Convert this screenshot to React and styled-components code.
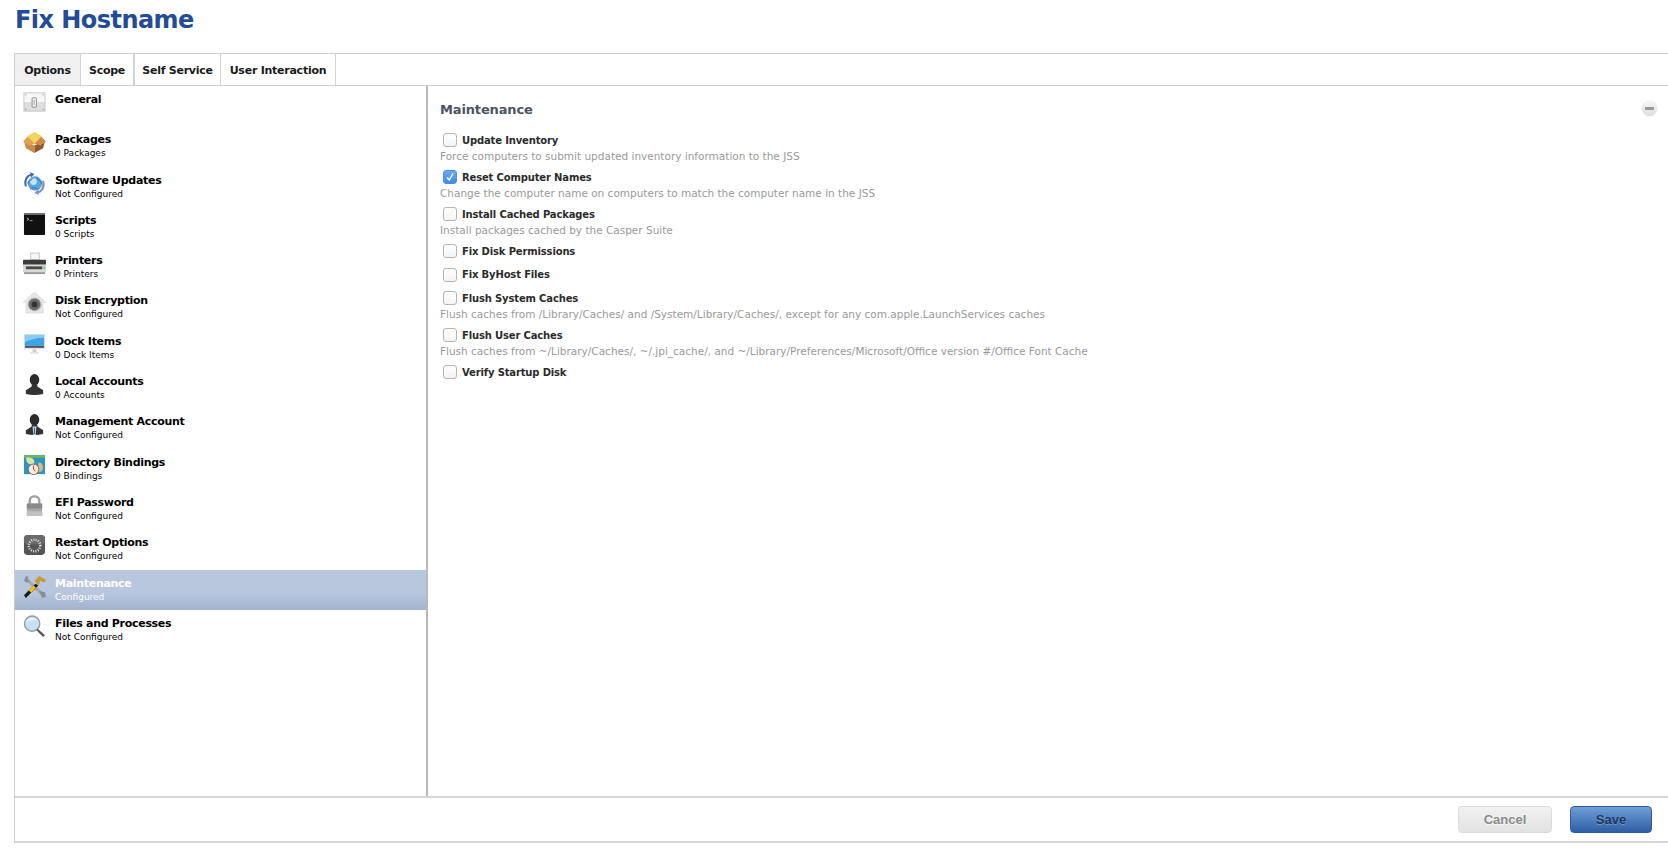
import React from 'react'
import styled, { createGlobalStyle } from 'styled-components'

const GlobalStyle = createGlobalStyle`
  html, body {
    margin: 0;
    padding: 0;
    background: #fff;
    font-family: "DejaVu Sans", "Liberation Sans", sans-serif;
  }
`

const Page = styled.div`
  display: flex;
  flex-direction: column;
  width: 1668px;
  height: 854px;
  overflow: hidden;
`

const Title = styled.h1`
  margin: 0;
  height: 53px;
  padding: 4px 0 0 15px;
  box-sizing: border-box;
  font-size: 24px;
  letter-spacing: -0.55px;
  line-height: 32px;
  font-weight: 700;
  color: #234b96;
`

const Panel = styled.div`
  margin-left: 14px;
  height: 790px;
  box-sizing: border-box;
  display: flex;
  flex-direction: column;
  border-left: 1px solid #cfcfcf;
  border-bottom: 2px solid #d6d6d6;
`

const TabBar = styled.div`
  display: flex;
  flex-shrink: 0;
  height: 33px;
  box-sizing: border-box;
  margin-left: -1px;
  border-top: 1px solid #cfcfcf;
  border-bottom: 1px solid #cfcfcf;
`

const Tab = styled.div`
  display: flex;
  align-items: center;
  justify-content: center;
  box-sizing: border-box;
  width: ${p => p.$width}px;
  padding-top: 1px;
  border-right: ${p => p.$thick ? 2 : 1}px solid #d4d4d4;
  border-left: ${p => p.$first ? '1px solid #cfcfcf' : 'none'};
  background: ${p => p.$active ? '#f0f0f0' : '#fff'};
  font-size: 11px;
  letter-spacing: -0.25px;
  font-weight: 700;
  color: #1a1a1a;
`

const Body = styled.div`
  flex: 1;
  display: flex;
  min-height: 0;
`

const Sidebar = styled.div`
  width: 411px;
  flex-shrink: 0;
  border-right: 2px solid #b9b9b9;
`

const Row = styled.div`
  display: flex;
  height: 40.3px;
  padding-left: 8px;
  background: ${p => p.$selected ? 'linear-gradient(#b9c7de 0, #b9c7de 55%, #a3b3cf 100%)' : 'transparent'};
  color: ${p => p.$selected ? '#fff' : '#000'};
`

const RowIcon = styled.div`
  width: 23px;
  height: 23px;
  margin-top: 5px;
  flex-shrink: 0;

  svg {
    display: block;
  }
`

const RowText = styled.div`
  margin-left: 9px;
  padding-top: 7px;
`

const RowTitle = styled.div`
  font-size: 11px;
  letter-spacing: -0.3px;
  line-height: 14px;
  font-weight: 700;
`

const RowSub = styled.div`
  font-size: 9px;
  line-height: 12px;
`

const Content = styled.div`
  position: relative;
  flex: 1;
  padding: 14px 0 0 12px;
`

const Heading = styled.h2`
  margin: 0 0 11px;
  font-size: 13px;
  letter-spacing: -0.15px;
  line-height: 20px;
  font-weight: 700;
  color: #4b5563;
`

const Collapse = styled.div`
  position: absolute;
  top: 15px;
  right: 11px;
  width: 15px;
  height: 15px;
  border-radius: 50%;
  background: linear-gradient(#f8f8f8, #dcdcdc);
  box-shadow: 0 0 1px #bbb;

  &::after {
    content: "";
    position: absolute;
    left: 3px;
    top: 6px;
    width: 9px;
    height: 3px;
    background: #9a9a9a;
  }
`

const Option = styled.div`
  margin-bottom: ${p => p.$described ? 4 : 5.7}px;
`

const OptionLine = styled.div`
  display: flex;
  align-items: center;
  height: 18px;
  padding-left: 3px;
`

const CheckBox = styled.span`
  display: flex;
  align-items: center;
  justify-content: center;
  width: 14px;
  height: 14px;
  box-sizing: border-box;
  border-radius: 3px;
  border: 1px solid ${p => p.$checked ? '#4a90e8' : '#b5b5b5'};
  background: ${p => p.$checked ? 'linear-gradient(#6aaaf5, #3d8bf0)' : 'linear-gradient(#fff, #f4f4f4)'};
`

const OptionLabel = styled.span`
  margin-left: 5px;
  font-size: 10px;
  letter-spacing: -0.15px;
  font-weight: 700;
  color: #2b2b2b;
`

const OptionHint = styled.div`
  font-size: 10.5px;
  line-height: 15px;
  color: #9a9a9a;
`

const Footer = styled.div`
  display: flex;
  flex-shrink: 0;
  justify-content: flex-end;
  align-items: center;
  gap: 18px;
  height: 45px;
  padding: 0 16px 1px 0;
  border-top: 2px solid #d6d6d6;
  box-sizing: border-box;
`

const Button = styled.div`
  display: flex;
  align-items: center;
  justify-content: center;
  width: ${p => p.$width}px;
  height: 27px;
  box-sizing: border-box;
  border-radius: 4px;
  font-family: "Liberation Sans", sans-serif;
  font-size: 13px;
  font-weight: 700;
  text-shadow: 0 1px 0 rgba(255, 255, 255, ${p => p.$primary ? 0.25 : 0.8});
  border: 1px solid ${p => p.$primary ? '#2f5b9e' : '#dcdcdc'};
  background: ${p => p.$primary ? 'linear-gradient(#6f9fd6, #2f5ea6)' : 'linear-gradient(#f2f2f2, #e2e2e2)'};
  color: ${p => p.$primary ? '#1c3763' : '#8a8a8a'};
`

const Svg = ({ children }) => (
  <svg width="23" height="23" viewBox="0 0 24 24">{children}</svg>
)

const icons = {
  general: (
    <Svg>
      <rect x="1" y="2" width="22" height="19" fill="#dedede" stroke="#c4c4c4" />
      <rect x="1.5" y="2.5" width="21" height="9" fill="#f7f7f7" />
      <rect x="9.5" y="7" width="4.5" height="10" rx="1" fill="#f4f4f4" stroke="#8d8d8d" />
      <rect x="11" y="9" width="1.5" height="6" fill="#bdbdbd" />
      <circle cx="3" cy="4" r=".6" fill="#777" />
      <circle cx="21" cy="4" r=".6" fill="#777" />
      <circle cx="3" cy="19" r=".6" fill="#777" />
      <circle cx="21" cy="19" r=".6" fill="#777" />
    </Svg>
  ),
  packages: (
    <Svg>
      <path d="M1 10 L12 15 V23 L3 18 Z" fill="#c98a4a" />
      <path d="M23 10 L12 15 V23 L21 18 Z" fill="#8f5a2e" />
      <path d="M5 5 L12 1 L19 5 L22 9 L12 14 L3 9 Z" fill="#f2d661" />
      <path d="M0 11 L5 6 L12 13 L6 15 Z" fill="#e0a05c" />
      <path d="M24 11 L19 6 L12 13 L18 15 Z" fill="#d08c46" />
    </Svg>
  ),
  updates: (
    <Svg>
      <circle cx="12.5" cy="12" r="7.5" fill="#5da4dc" />
      <circle cx="11" cy="10" r="3.5" fill="#c5e2f6" />
      <path d="M5 12 C5 8 8 10 10 7 M14 5 C15 8 19 9 20 13 M8 18 C10 15 14 17 16 18" stroke="#2a6eb0" fill="none" />
      <path d="M2 15 C0 9 3 3 8 2 L7 0 L12 2 L8 6 L8 4 C4 6 3 10 4 15 Z" fill="#4b66ad" />
      <path d="M22 9 C24 15 21 21 16 22 L17 24 L12 22 L16 18 L16 20 C20 18 21 14 20 9 Z" fill="#7e8fbe" />
    </Svg>
  ),
  scripts: (
    <Svg>
      <rect x="1" y="1" width="22" height="23" rx="1" fill="#111" />
      <rect x="1" y="1" width="22" height="2" fill="#777" />
      <path d="M4 6 L6 7.5 L4 9" stroke="#eee" strokeWidth=".8" fill="none" />
      <path d="M7 9 H10" stroke="#bbb" strokeWidth=".8" />
    </Svg>
  ),
  printers: (
    <Svg>
      <path d="M8 1 H17 V8 H8 Z" fill="#f7f7f7" stroke="#c4c4c4" />
      <rect x="0" y="8" width="24" height="6" rx="1" fill="#3b3b3b" />
      <rect x="0" y="13" width="24" height="8" fill="#d8d8d8" />
      <rect x="3" y="15" width="17" height="3" fill="#4a4a4a" />
      <rect x="1" y="21" width="22" height="2" fill="#9a9a9a" />
      <rect x="20" y="15" width="3" height="3" fill="#8fc7a0" />
    </Svg>
  ),
  disk: (
    <Svg>
      <path d="M12 0 L24 11 H21 V22 H3 V11 H0 Z" fill="#e6e6e6" stroke="#d0d0d0" strokeWidth=".5" />
      <circle cx="12" cy="13" r="6.5" fill="#6a6a6a" />
      <circle cx="12" cy="13" r="6.5" fill="none" stroke="#aaa" strokeDasharray="1.2 1" strokeWidth="1.5" />
      <circle cx="12" cy="13" r="3" fill="#333" />
    </Svg>
  ),
  dock: (
    <Svg>
      <rect x="1" y="1" width="22" height="16" rx="1" fill="#e0e0e0" />
      <rect x="2" y="2" width="20" height="11.5" fill="#3fa4e6" />
      <path d="M2 2 H22 V5 C14 5 8 7 2 9 Z" fill="#86cdf5" />
      <rect x="2" y="13.5" width="20" height="2" fill="#555" />
      <rect x="10" y="17" width="4" height="3" fill="#ccc" />
      <rect x="7.5" y="20" width="9" height="1.5" fill="#dedede" />
    </Svg>
  ),
  local: (
    <Svg>
      <ellipse cx="12" cy="7" rx="5" ry="6" fill="#2a2a2a" />
      <path d="M9 12 H15 V14 L21 18 V22 Q12 24 3 22 V18 L9 14 Z" fill="#333" />
    </Svg>
  ),
  management: (
    <Svg>
      <ellipse cx="12" cy="7" rx="5" ry="6" fill="#2a2a2a" />
      <path d="M9 12 H15 V14 L21 18 V22 Q12 24 3 22 V18 L9 14 Z" fill="#333" />
      <path d="M10 14 H14 L13.2 23 H10.8 Z" fill="#cfe3ee" />
      <path d="M11.4 15 H12.6 L12.8 22 H11.2 Z" fill="#34708f" />
    </Svg>
  ),
  directory: (
    <Svg>
      <rect x="1" y="1" width="22" height="20" fill="#2f94c4" />
      <rect x="1" y="1" width="22" height="3" fill="#6fb36a" />
      <path d="M3 4 C8 3 12 5 12 9 C10 12 6 11 4 8 Z" fill="#d7e6a0" />
      <path d="M16 9 C20 8 22 12 20 18 L16 19 Z" fill="#d7b88a" />
      <circle cx="11" cy="16" r="5.5" fill="#f3ece0" stroke="#8a6a50" />
      <path d="M11 12 V16 L13 18" stroke="#b33" fill="none" />
    </Svg>
  ),
  efi: (
    <Svg>
      <path d="M7 11 V7 C7 1 17 1 17 7 V11" fill="none" stroke="#a0a0a0" strokeWidth="2.5" />
      <rect x="4" y="10" width="16" height="13" rx="1" fill="#a8a8a8" />
      <rect x="4" y="10" width="16" height="5" rx="1" fill="#8a8a8a" />
      <rect x="4" y="18" width="16" height="5" rx="1" fill="#c0c0c0" />
    </Svg>
  ),
  restart: (
    <Svg>
      <rect x="1" y="1" width="22" height="21" rx="4" fill="#555" />
      <rect x="1" y="1" width="22" height="10" rx="4" fill="#6a6a6a" />
      <circle cx="12" cy="12" r="6" fill="none" stroke="#e8e8e8" strokeWidth="2.6" strokeDasharray="1 1.4" />
    </Svg>
  ),
  maintenance: (
    <Svg>
      <path d="M5 4 L23 20 L21 23 L3 6 Z" fill="#a4a8b0" />
      <path d="M1 6 L3 1 L6 2 L5 4 L7 6 L4 8 Z" fill="#8a8e96" />
      <path d="M17 17 L23 18 L24 23 L20 24 Z" fill="#8a8e96" />
      <path d="M1 21 L13 9 L16 11 L3 24 Z" fill="#1a1a1a" />
      <path d="M6 16 L11 11 L13.5 13 L8.5 18.5 Z" fill="#f0c419" />
      <path d="M12 6 L17 1 L24 5 L22 8 L18 6 L16 11 Z" fill="#c99a3a" />
    </Svg>
  ),
  files: (
    <Svg>
      <circle cx="9.5" cy="9" r="8" fill="#c9e0f4" stroke="#9a9a9a" strokeWidth="1.4" />
      <path d="M3 7 C5 3 11 2 15 5 C11 5 6 6 3 7 Z" fill="#eff6fc" />
      <path d="M15 14 L23 21 L21 23 L14 16 Z" fill="#555" />
    </Svg>
  ),
}

const sections = [
  { icon: 'general', title: 'General' },
  { icon: 'packages', title: 'Packages', sub: '0 Packages' },
  { icon: 'updates', title: 'Software Updates', sub: 'Not Configured' },
  { icon: 'scripts', title: 'Scripts', sub: '0 Scripts' },
  { icon: 'printers', title: 'Printers', sub: '0 Printers' },
  { icon: 'disk', title: 'Disk Encryption', sub: 'Not Configured' },
  { icon: 'dock', title: 'Dock Items', sub: '0 Dock Items' },
  { icon: 'local', title: 'Local Accounts', sub: '0 Accounts' },
  { icon: 'management', title: 'Management Account', sub: 'Not Configured' },
  { icon: 'directory', title: 'Directory Bindings', sub: '0 Bindings' },
  { icon: 'efi', title: 'EFI Password', sub: 'Not Configured' },
  { icon: 'restart', title: 'Restart Options', sub: 'Not Configured' },
  { icon: 'maintenance', title: 'Maintenance', sub: 'Configured', selected: true },
  { icon: 'files', title: 'Files and Processes', sub: 'Not Configured' },
]

const options = [
  { label: 'Update Inventory', hint: 'Force computers to submit updated inventory information to the JSS' },
  { label: 'Reset Computer Names', hint: 'Change the computer name on computers to match the computer name in the JSS', checked: true },
  { label: 'Install Cached Packages', hint: 'Install packages cached by the Casper Suite' },
  { label: 'Fix Disk Permissions' },
  { label: 'Fix ByHost Files' },
  { label: 'Flush System Caches', hint: 'Flush caches from /Library/Caches/ and /System/Library/Caches/, except for any com.apple.LaunchServices caches' },
  { label: 'Flush User Caches', hint: 'Flush caches from ~/Library/Caches/, ~/.jpi_cache/, and ~/Library/Preferences/Microsoft/Office version #/Office Font Cache' },
  { label: 'Verify Startup Disk' },
]

const tabs = [
  { name: 'Options', width: 67, active: true, first: true },
  { name: 'Scope', width: 54, thick: true },
  { name: 'Self Service', width: 86 },
  { name: 'User Interaction', width: 115 },
]

function App() {
  return (
    <Page>
      <GlobalStyle />
      <Title>Fix Hostname</Title>
      <Panel>
        <TabBar>
          {tabs.map(t => (
            <Tab key={t.name} $width={t.width} $active={t.active} $first={t.first} $thick={t.thick}>{t.name}</Tab>
          ))}
        </TabBar>
        <Body>
          <Sidebar>
            {sections.map(s => (
              <Row key={s.title} $selected={s.selected}>
                <RowIcon>{icons[s.icon]}</RowIcon>
                <RowText>
                  <RowTitle>{s.title}</RowTitle>
                  {s.sub && <RowSub>{s.sub}</RowSub>}
                </RowText>
              </Row>
            ))}
          </Sidebar>
          <Content>
            <Heading>Maintenance</Heading>
            <Collapse />
            {options.map(o => (
              <Option key={o.label} $described={!!o.hint}>
                <OptionLine>
                  <CheckBox $checked={o.checked}>
                    {o.checked && (
                      <svg width="10" height="10" viewBox="0 0 10 10">
                        <path d="M2 5.5 L4.2 8 L8 1.5" fill="none" stroke="#fff" strokeWidth="1.4" />
                      </svg>
                    )}
                  </CheckBox>
                  <OptionLabel>{o.label}</OptionLabel>
                </OptionLine>
                {o.hint && <OptionHint>{o.hint}</OptionHint>}
              </Option>
            ))}
          </Content>
        </Body>
        <Footer>
          <Button $width={94}>Cancel</Button>
          <Button $width={82} $primary>Save</Button>
        </Footer>
      </Panel>
    </Page>
  )
}

export default App
